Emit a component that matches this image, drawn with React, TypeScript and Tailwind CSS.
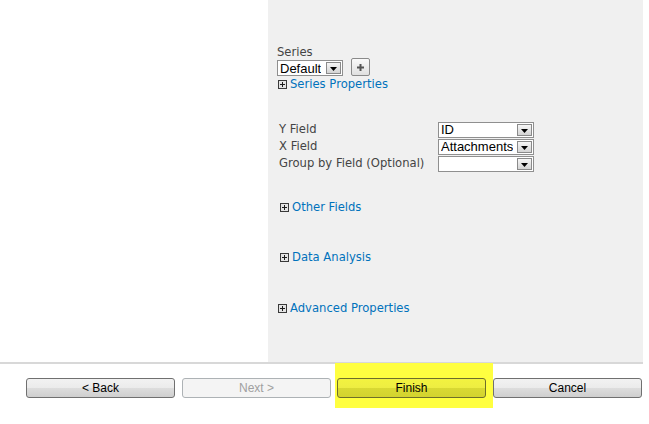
import React from "react";

const labelFont = { fontFamily: '"DejaVu Sans", Verdana, sans-serif' };

function PlusBox() {
  return (
    <svg width="9" height="9" viewBox="0 0 9 9" className="shrink-0">
      <rect x="0.5" y="0.5" width="8" height="8" fill="#ffffff" stroke="#3a3a3a" />
      <rect x="1" y="1" width="7" height="7" fill="#e4e4e4" />
      <path d="M2 4.5 H7 M4.5 2 V7" stroke="#1a1a1a" strokeWidth="1" />
    </svg>
  );
}

function Arrow() {
  return (
    <div className="w-[15px] h-[12px] mr-[1px] border border-[#8a8a8a] bg-gradient-to-b from-[#f6f6f6] to-[#d4d4d4] flex items-end justify-center pb-[2px]">
      <svg width="7" height="4" viewBox="0 0 7 4">
        <path d="M0 0 H7 L3.5 4 Z" fill="#000" />
      </svg>
    </div>
  );
}

function Select({ value, w }: { value: string; w: string }) {
  return (
    <div
      className={`${w} h-[16px] bg-white border border-[#8f8f8f] flex items-center justify-between pl-[2px] text-[13px] text-black leading-none`}
      style={{ fontFamily: '"Liberation Sans", Arial, sans-serif' }}
    >
      <span className="truncate">{value}</span>
      <Arrow />
    </div>
  );
}

function LinkRow({ text, className }: { text: string; className?: string }) {
  return (
    <div className={`flex items-center gap-[3px] text-[11.6px] text-[#0072bc] leading-none ${className ?? ""}`} style={labelFont}>
      <PlusBox />
      <span>{text}</span>
    </div>
  );
}

function Btn({ label, variant }: { label: string; variant: "normal" | "disabled" | "finish" }) {
  const base =
    "w-[149px] h-[20px] rounded-[3px] border flex items-center justify-center text-[12px] leading-none";
  const cls =
    variant === "disabled"
      ? "border-[#adb2b5] bg-[#f4f4f4] text-[#a0a0a0]"
      : variant === "finish"
      ? "border-[#6e6e2a] bg-[linear-gradient(#f3f340_0%,#eded42_50%,#d9d933_50%,#d3d32e_100%)] text-black"
      : "border-[#707070] bg-[linear-gradient(#f2f2f2_0%,#ebebeb_50%,#dddddd_50%,#cfcfcf_100%)] text-black";
  return (
    <div className={`${base} ${cls}`} style={{ fontFamily: '"Liberation Sans", Tahoma, sans-serif' }}>
      {label}
    </div>
  );
}

export default function App() {
  return (
    <div className="w-[649px] h-[424px] bg-white overflow-hidden relative">
      <div className="flex h-[362px]">
        <div className="w-[268px] bg-white" />
        <div className="w-[375px] bg-[#f0f0f0] pl-[9px] pt-[45px] text-[#444444]" style={labelFont}>
          <div className="text-[11.6px] leading-[14px] text-[#444]">Series</div>
          <div className="flex items-start mt-[1px]">
            <Select value="Default" w="w-[66px]" />
            <div className="ml-[8px] -mt-[2px] w-[19px] h-[18px] rounded-[2px] border border-[#8a8a8a] bg-gradient-to-b from-[#fafafa] to-[#e0e0e0] flex items-center justify-center">
              <svg width="9" height="9" viewBox="0 0 9 9">
                <path d="M1 4.5 H8 M4.5 1 V8" stroke="#555" strokeWidth="2" />
              </svg>
            </div>
          </div>
          <LinkRow text="Series Properties" className="mt-[3px] ml-[1px]" />

          <div className="mt-[31px] ml-[2px] grid grid-cols-[159px_96px] gap-y-[1px] text-[11.6px]">
            <div className="h-[16px] flex items-center">Y Field</div>
            <Select value="ID" w="w-[96px]" />
            <div className="h-[16px] flex items-center">X Field</div>
            <Select value="Attachments" w="w-[96px]" />
            <div className="h-[16px] flex items-center">Group by Field (Optional)</div>
            <Select value="" w="w-[96px]" />
          </div>

          <LinkRow text="Other Fields" className="mt-[30px] ml-[3px]" />
          <LinkRow text="Data Analysis" className="mt-[39px] ml-[3px]" />
          <LinkRow text="Advanced Properties" className="mt-[39px] ml-[1px]" />
        </div>
        <div className="flex-1 bg-white" />
      </div>
      <div className="w-[643px] h-[2px] bg-[#d8d8d8]" />
      <div className="flex items-start pl-[26px] pt-[14px]">
        <Btn label="< Back" variant="normal" />
        <div className="ml-[7px]">
          <Btn label="Next >" variant="disabled" />
        </div>
        <div className="ml-[4px] -mt-[15px] w-[158px] h-[45px] bg-[#ffff40] flex items-start pl-[2px] pt-[15px]">
          <Btn label="Finish" variant="finish" />
        </div>
        <div>
          <Btn label="Cancel" variant="normal" />
        </div>
      </div>
    </div>
  );
}
